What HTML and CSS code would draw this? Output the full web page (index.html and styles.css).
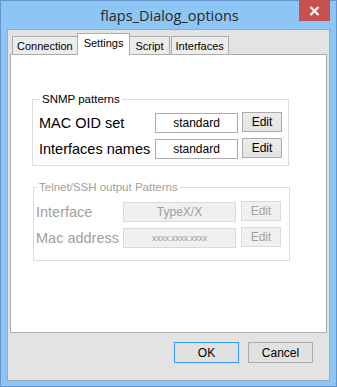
FILE: index.html
```html
<!DOCTYPE html>
<html>
<head>
    <link rel="stylesheet" href="styles.css">
</head>
<body>
    <div id="window">
        <div id="titlebar">
            <span class="title">flaps_Dialog_options</span>
            <div class="close">
                <svg width="11" height="10" viewBox="0 0 11 10">
                    <path d="M1.5 1 L9.5 9 M9.5 1 L1.5 9" stroke="#fff" stroke-width="2.2"/>
                </svg>
            </div>
        </div>
        <div id="client">
            <ul class="tabs">
                <li class="tab">Connection</li>
                <li class="tab selected">Settings</li>
                <li class="tab">Script</li>
                <li class="tab">Interfaces</li>
            </ul>
            <div class="panel">
                <fieldset class="group snmp">
                    <legend>SNMP patterns</legend>
                    <div class="row">
                        <label>MAC OID set</label>
                        <div class="field">standard</div>
                        <button class="btn">Edit</button>
                    </div>
                    <div class="row">
                        <label>Interfaces names</label>
                        <div class="field">standard</div>
                        <button class="btn">Edit</button>
                    </div>
                </fieldset>
                <fieldset class="group telnet disabled">
                    <legend>Telnet/SSH output Patterns</legend>
                    <div class="row">
                        <label>Interface</label>
                        <div class="field">TypeX/X</div>
                        <button class="btn">Edit</button>
                    </div>
                    <div class="row">
                        <label>Mac address</label>
                        <div class="field small">xxxx.xxxx.xxxx</div>
                        <button class="btn">Edit</button>
                    </div>
                </fieldset>
            </div>
            <div class="actions">
                <button class="btn big default">OK</button>
                <button class="btn big">Cancel</button>
            </div>
        </div>
    </div>
</body>
</html>
```

FILE: styles.css
```css
body{
    margin: 0;
    font-family: "Liberation Sans", Arial, sans-serif;
}

#window{
    width: 337px;
    height: 387px;
    box-sizing: border-box;
    background-color: rgb(141, 198, 244);
    border: 1px solid rgb(100, 150, 205);
    display: flex;
    flex-direction: column;
}

#titlebar{
    height: 28px;
    flex-shrink: 0;
    position: relative;
    display: flex;
    justify-content: center;
    align-items: center;
}

#titlebar .title{
    font-family: "Open Sans", "Noto Sans", sans-serif;
    font-size: 14.5px;
    color: rgb(40, 40, 40);
    margin-top: 0px;
    margin-left: 2px;
}

#titlebar .close{
    position: absolute;
    top: -1px;
    right: 6px;
    width: 31px;
    height: 21px;
    background-color: rgb(199, 80, 80);
    display: flex;
    justify-content: center;
    align-items: center;
}

#client{
    margin: 0 6px 6px 6px;
    height: 352px;
    box-sizing: border-box;
    flex-shrink: 0;
    background-color: rgb(227, 227, 227);
    border: 1px solid rgb(150, 170, 190);
    padding: 3px 2px 0 2px;
    display: flex;
    flex-direction: column;
}

.tabs{
    list-style-type: none;
    margin: 0 0 0 2px;
    padding: 0;
    display: flex;
    align-items: flex-end;
    height: 21px;
    flex-shrink: 0;
}

.tab{
    font-size: 11px;
    color: black;
    height: 17px;
    line-height: 18px;
    padding: 0 4px;
    background-color: rgb(236, 236, 236);
    border: 1px solid rgb(172, 172, 172);
    border-bottom: none;
    margin-right: -1px;
}

.tab.selected{
    height: 21px;
    line-height: 18px;
    background-color: white;
    margin-bottom: -1px;
    position: relative;
    z-index: 1;
    padding: 0 6px;
}

.tab:nth-child(3){
    margin-right: 1px;
    padding: 0 5px;
}

.panel{
    height: 279px;
    flex-shrink: 0;
    box-sizing: border-box;
    background-color: white;
    border: 1px solid rgb(172, 172, 172);
    padding: 38px 0 0 21px;
}

.group{
    margin: 0;
    width: 257px;
    box-sizing: border-box;
    border: 1px solid rgb(220, 220, 220);
    padding: 7px 6px 6px 6px;
}

.group legend{
    font-size: 11.5px;
    padding: 0 2px;
    margin-left: 1px;
    line-height: 13px;
}

.row{
    display: flex;
    align-items: center;
    height: 20px;
}

.row + .row{
    margin-top: 6px;
}

.row label{
    font-size: 14.5px;
    width: 116px;
}

.field{
    width: 83px;
    height: 20px;
    box-sizing: border-box;
    border: 1px solid rgb(171, 171, 171);
    font-size: 12px;
    text-align: center;
    line-height: 18px;
}

.btn{
    font-family: "Liberation Sans", Arial, sans-serif;
    font-size: 12px;
    margin: 0;
    margin-top: -2px;
    margin-left: 4px;
    width: 40px;
    height: 20px;
    padding: 0;
    background: linear-gradient(rgb(236, 236, 236), rgb(226, 226, 226));
    border: 1px solid rgb(172, 172, 172);
    color: black;
}

.telnet{
    margin-top: 15px;
    margin-left: 1px;
    padding: 8px 6px 12px 2px;
}

.telnet .row label{
    width: 87px;
}

.telnet .field{
    width: 113px;
    background-color: rgb(240, 240, 240);
    border-color: rgb(218, 218, 218);
}

.telnet .btn{
    margin-left: 5px;
    background: rgb(240, 240, 240);
    border-color: rgb(218, 218, 218);
}

.disabled,
.disabled legend,
.disabled .field,
.disabled .btn{
    color: rgb(160, 160, 160);
}

.field.small{
    font-size: 9px;
    letter-spacing: -0.3px;
}

.actions{
    display: flex;
    justify-content: flex-end;
    gap: 9px;
    padding: 9px 14px 0 0;
}

.btn.big{
    width: 65px;
    height: 21px;
    margin: 0;
    font-size: 12px;
    background: rgb(225, 225, 225);
}

.btn.default{
    border-color: rgb(51, 153, 255);
}
```
